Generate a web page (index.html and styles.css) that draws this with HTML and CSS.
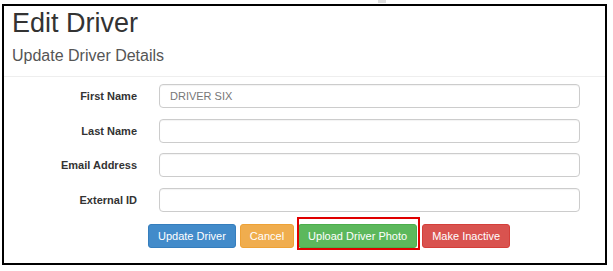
FILE: index.html
```html
<!DOCTYPE html>
<html lang="en">
  <head>
    <meta charset="UTF-8" />
    <meta name="viewport" content="width=device-width, initial-scale=1.0" />
    <title>Edit Driver</title>
    <link rel="stylesheet" href="styles.css">
  </head>
  <body>
    <div class="topbar"><span class="tab"></span></div>
    <div class="panel">
      <div class="header">
        <h1>Edit Driver</h1>
        <h2>Update Driver Details</h2>
      </div>
      <form class="driver-form">
        <label for="first-name">First Name</label>
        <input id="first-name" type="text" value="DRIVER SIX" />
        <label for="last-name">Last Name</label>
        <input id="last-name" type="text" />
        <label for="email">Email Address</label>
        <input id="email" type="text" />
        <label for="external-id">External ID</label>
        <input id="external-id" type="text" />
      </form>
      <div class="actions">
        <button class="btn btn-primary">Update Driver</button>
        <button class="btn btn-warning">Cancel</button>
        <span class="highlight"><button class="btn btn-success">Upload Driver Photo</button></span>
        <button class="btn btn-danger">Make Inactive</button>
      </div>
    </div>
  </body>
</html>
```

FILE: styles.css
```css
* {
  margin: 0;
  padding: 0;
  box-sizing: border-box;
}
body {
  font-family: "Liberation Sans", Arial, sans-serif;
  background: #fff;
  color: #333;
}
.topbar {
  height: 4px;
}
.tab {
  display: block;
  width: 8px;
  height: 3px;
  margin-left: 378px;
  background: #ddd;
}
.panel {
  width: 605px;
  height: 261px;
  margin-left: 2px;
  border: 2px solid #000;
}
.header {
  padding-left: 8px;
  padding-bottom: 12px;
  border-bottom: 1px solid #eee;
}
.header h1 {
  margin-top: 3px;
  font-size: 27px;
  font-weight: normal;
  line-height: 1.1;
  color: #333;
}
.header h2 {
  margin-top: 8px;
  font-size: 16px;
  font-weight: normal;
  line-height: 1.1;
  color: #555;
}
.driver-form {
  display: grid;
  grid-template-columns: 133px 421px;
  grid-auto-rows: 24px;
  column-gap: 22px;
  row-gap: 10.5px;
  margin-top: 7px;
  align-items: center;
}
.driver-form label {
  text-align: right;
  font-size: 11px;
  font-weight: bold;
  color: #333;
}
.driver-form input {
  height: 24px;
  padding: 0 10px;
  border: 1px solid #ccc;
  border-radius: 4px;
  font-family: inherit;
  font-size: 11px;
  color: #777;
  box-shadow: inset 0 1px 1px rgba(0, 0, 0, 0.05);
}
.actions {
  display: flex;
  gap: 4px;
  margin-top: 12.5px;
  padding-left: 144px;
}
.btn {
  height: 24px;
  padding: 0 9px;
  border: 1px solid transparent;
  border-radius: 3px;
  font-family: inherit;
  font-size: 11px;
  line-height: 22px;
  color: #fff;
  cursor: pointer;
}
.btn-primary {
  background: #428bca;
  border-color: #357ebd;
}
.btn-warning {
  background: #f0ad4e;
  border-color: #eea236;
}
.btn-success {
  background: #5cb85c;
  border-color: #4cae4c;
}
.btn-danger {
  background: #d9534f;
  border-color: #d43f3a;
  margin-left: 1px;
}
.highlight {
  position: relative;
  display: flex;
}
.highlight::after {
  content: "";
  position: absolute;
  top: -7px;
  left: -1px;
  width: 119px;
  height: 29px;
  border: 2px solid #e00000;
}
```
